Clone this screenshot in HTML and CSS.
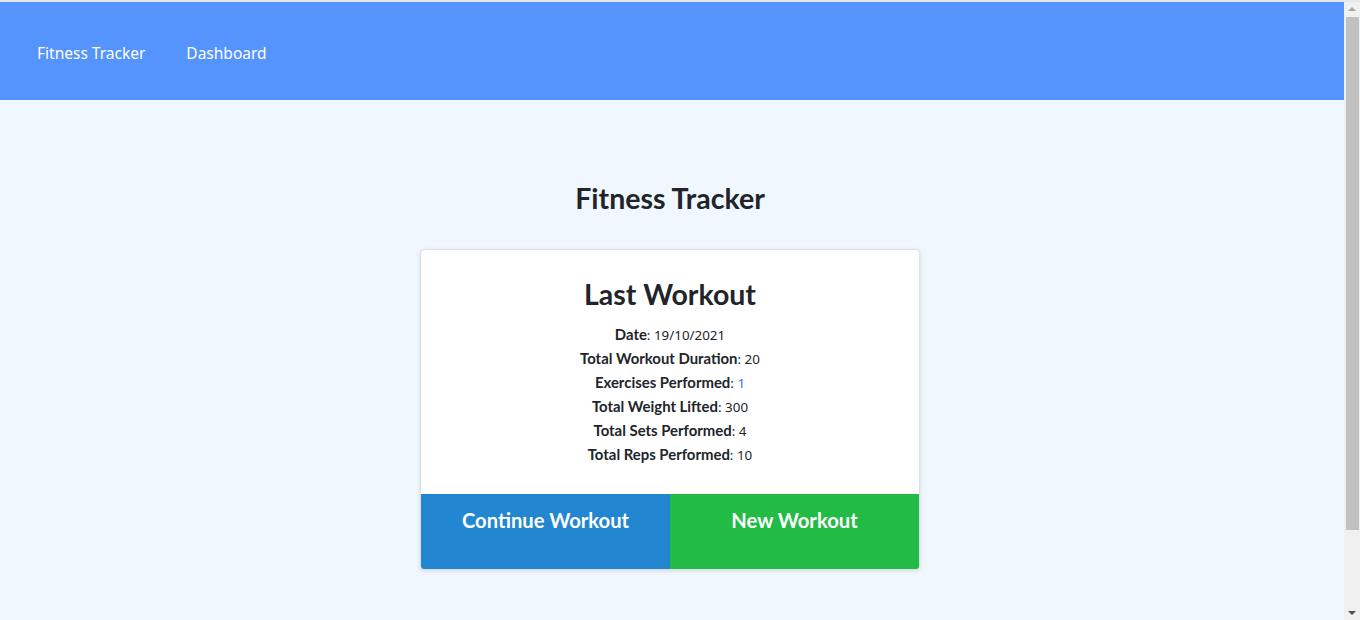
FILE: index.html
```html
<!DOCTYPE html>
<html lang="en">
<head>
<meta charset="utf-8">
<title>Fitness Tracker</title>
<link rel="stylesheet" href="styles.css">
</head>
<body>
<div class="page">
  <nav class="topnav">
    <a class="nav-link" href="#">Fitness Tracker</a>
    <a class="nav-link" href="#">Dashboard</a>
  </nav>
  <main class="main">
    <h1 class="page-title">Fitness Tracker</h1>
    <section class="card">
      <div class="card-body">
        <h2 class="card-title">Last Workout</h2>
        <ul class="stats">
          <li><strong>Date</strong>: <span class="val">19/10/2021</span></li>
          <li><strong>Total Workout Duration</strong>: <span class="val">20</span></li>
          <li><strong>Exercises Performed</strong>: <span class="val blue">1</span></li>
          <li><strong>Total Weight Lifted</strong>: <span class="val">300</span></li>
          <li><strong>Total Sets Performed</strong>: <span class="val">4</span></li>
          <li><strong>Total Reps Performed</strong>: <span class="val">10</span></li>
        </ul>
      </div>
      <div class="actions">
        <a class="btn btn-continue" href="#">Continue Workout</a>
        <a class="btn btn-new" href="#">New Workout</a>
      </div>
    </section>
  </main>
</div>
<div class="scrollbar" aria-hidden="true">
  <div class="sb-arrow sb-up"></div>
  <div class="sb-track"><div class="sb-thumb"></div></div>
  <div class="sb-arrow sb-down"></div>
</div>
</body>
</html>
```
FILE: styles.css
```css
html, body {
  margin: 0;
  padding: 0;
}
body {
  display: flex;
  height: 618px;
  overflow: hidden;
  background: #f0f7ff;
  border-top: 2px solid #e3e7ee;
  font-family: "Noto Sans", "Open Sans", sans-serif;
  color: #212529;
}
.page {
  flex: 1;
  min-width: 0;
}
.scrollbar {
  width: 16px;
  background: #f0f0f0;
  display: flex;
  flex-direction: column;
}
.sb-arrow {
  height: 14px;
  display: flex;
  align-items: center;
  justify-content: center;
}
.sb-up::before {
  content: "";
  border-left: 4px solid transparent;
  border-right: 4px solid transparent;
  border-bottom: 4px solid #a3a3a3;
}
.sb-down::before {
  content: "";
  border-left: 4px solid transparent;
  border-right: 4px solid transparent;
  border-top: 4px solid #505050;
}
.sb-track {
  flex: 1;
  padding: 1px 1px 0 2px;
}
.sb-thumb {
  height: 513px;
  background: #c1c1c1;
}
.topnav {
  background: #5593fd;
  height: 98px;
  display: flex;
  align-items: center;
  padding-left: 37px;
  gap: 41px;
}
.nav-link {
  color: #ffffff;
  text-decoration: none;
  font-size: 15.5px;
  font-family: "Noto Sans", sans-serif;
  padding-top: 3px;
}
.main {
  display: flex;
  flex-direction: column;
  align-items: center;
  padding-top: 81px;
  padding-right: 4px;
}
.page-title {
  font-family: Lato, sans-serif;
  font-weight: 700;
  font-size: 28.5px;
  line-height: 34px;
  margin: 0 0 34px 0;
}
.card {
  width: 498px;
  background: #ffffff;
  border: 1px solid #dcdfe4;
  border-radius: 4px;
  box-shadow: 0 1px 4px rgba(0,0,0,0.12);
  overflow: hidden;
}
.card-body {
  padding: 26px 0 27px;
  text-align: center;
}
.card-title {
  font-family: Lato, sans-serif;
  font-weight: 700;
  font-size: 28.5px;
  line-height: 36px;
  margin: 0 0 11px 0;
}
.stats {
  list-style: none;
  margin: 0;
  padding: 0;
  font-size: 13.4px;
  line-height: 20px;
}
.stats li {
  height: 24px;
  line-height: 24px;
  overflow: hidden;
}
.stats strong {
  font-family: Lato, sans-serif;
  font-weight: 700;
  font-size: 14.9px;
  line-height: 18px;
}
.val {
  font-family: "Noto Sans", sans-serif;
  line-height: 18px;
}
.blue {
  color: #2a7ad0;
}
.actions {
  display: flex;
}
.btn {
  flex: 1;
  height: 75px;
  box-sizing: border-box;
  padding-top: 14px;
  text-align: center;
  color: #ffffff;
  text-decoration: none;
  font-family: Lato, sans-serif;
  font-weight: 700;
  font-size: 20.2px;
  line-height: 24px;
}
.btn-continue {
  background: #2286d1;
}
.btn-new {
  background: #21bb45;
}
```
